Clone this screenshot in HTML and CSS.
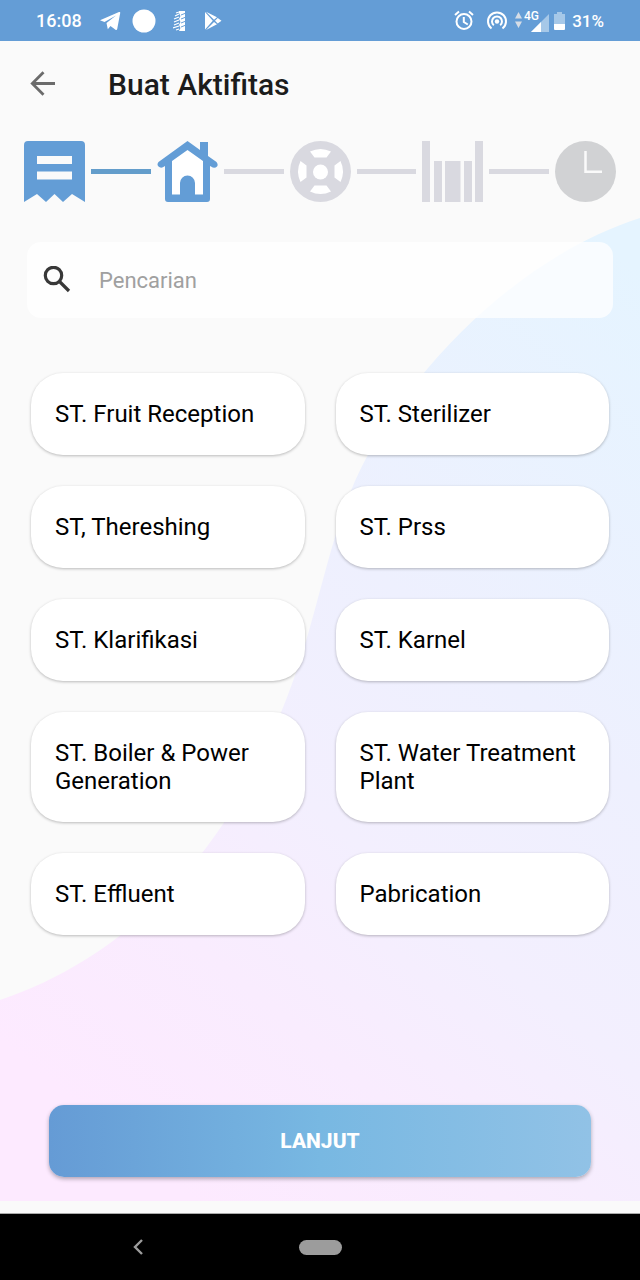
FILE: index.html
```html
<!DOCTYPE html>
<html lang="id">
<head>
<meta charset="utf-8">
<meta name="viewport" content="width=device-width, initial-scale=1">
<title>Buat Aktifitas</title>
<link rel="stylesheet" href="styles.css">
</head>
<body>
<div class="status-bar">
  <div class="status-left">
    <span class="clock">16:08</span>
    <svg width="22" height="20" viewBox="0 0 22 20"><path fill="#fff" d="M1 9.200L20 1Q21.500.500 21.200 2L18.200 18Q17.800 19.500 16.500 18.700L11.500 15L8.800 18.200L7.500 12L17 4.500L5.500 11Z"/></svg>
    <svg width="24" height="24" viewBox="0 0 24 24"><circle cx="12" cy="12" r="11.500" fill="#fff"/></svg>
    <svg width="14" height="22" viewBox="0 0 14 22"><path fill="#fff" d="M6 1h6v20H6l1.500-3L6 15l1.500-3L6 9l1.500-3L6 3z"/><path stroke="#68a0d8" stroke-width="1" d="M8 5l5-2M8 9l5-2M8 13l5-2M8 17l5-2"/><path stroke="#fff" stroke-width="1.200" d="M3 3l3-1M2 6l4-2M1 9l5-2M1 12l5-2M1 15l5-2M0 18l6-2M3 20l3-1"/></svg>
    <svg width="18" height="20" viewBox="0 0 18 20"><path fill="#fff" d="M1 1v17.500l7.800-8.700zM2 .800l8 8 3-2.500zM2 19l8-8 3 2.300zM11 9.800l2.700-2.800L17.500 9.800 13.700 12.600z"/></svg>
  </div>
  <div class="status-right">
    <svg width="20" height="21" viewBox="0 0 20 21"><g fill="none" stroke="#fff" stroke-width="2"><circle cx="10" cy="11.500" r="7.500"/><path d="M9.800 7v5l4 2.500M1 5l4-3.500M19 5l-4-3.500"/></g></svg>
    <svg class="hotspot" width="22" height="21" viewBox="0 0 22 21"><g fill="none" stroke="#fff" stroke-width="2"><path d="M5.500 18.500A9 9 0 1 1 16.500 18.500M7.800 15.300A5 5 0 1 1 14.200 15.300"/></g><circle cx="11" cy="11.500" r="2.200" fill="#fff"/></svg>
    <div class="signal">
      <svg width="7" height="20" viewBox="0 0 7 20"><path fill="#d6dde6" d="M3.500 1L7 7.500H0zM3.500 17L0 10.500h7z"/></svg>
      <svg width="25" height="24" viewBox="0 0 25 24"><path fill="#a6c8e8" d="M25 5v18H7z"/><path fill="#fff" d="M17 13v10H7z"/><text x="0" y="11" class="network">4G</text></svg>
    </div>
    <svg width="11" height="20" viewBox="0 0 11 20"><path fill="#a6c8e8" d="M3 1h5v2h3v11H0V3h3z"/><path fill="#fff" d="M0 13h11v5q0 1-1 1H1q-1 0-1-1z"/></svg>
    <span class="battery">31%</span>
  </div>
</div>

<div class="screen">
  <svg class="backdrop" viewBox="0 0 640 1160" preserveAspectRatio="none" aria-hidden="true">
    <defs>
      <linearGradient id="wash" gradientUnits="userSpaceOnUse" x1="640" y1="230" x2="0" y2="1000">
        <stop offset="0" stop-color="#e5f4ff"/>
        <stop offset=".4" stop-color="#eef0fe"/>
        <stop offset=".62" stop-color="#f3effe"/>
        <stop offset=".8" stop-color="#f9ecfe"/>
        <stop offset="1" stop-color="#fdeaff"/>
      </linearGradient>
    </defs>
    <path fill="url(#wash)" d="M640 177C520 215 405 330 355 440C325 510 315 590 282 669C235 790 145 910 0 959V1160H640Z"/>
  </svg>

  <header class="app-bar">
    <button class="back" type="button" aria-label="Kembali">
      <svg width="26" height="26" viewBox="0 0 26 26"><path fill="none" stroke="#6b6b6b" stroke-width="2.800" d="M26 12.500H4M14.500 1.300L3.300 12.500L14.500 23.700"/></svg>
    </button>
    <h1 class="title">Buat Aktifitas</h1>
  </header>

  <main class="content">
    <div class="steps">
      <svg class="step" viewBox="0 0 61 61"><path fill="#639dd6" fill-rule="evenodd" d="M4 0H57Q61 0 61 4V61L48 53L39 61L30.500 53L22 61L13 53L0 61V4Q0 0 4 0ZM13 15V23H48V15ZM13 30.500V38.500H48V30.500Z"/></svg>
      <span class="line done"></span>
      <svg class="step" viewBox="0 0 61 61"><path fill="#fff" d="M15 20L30.500 8L46 20V54H15z"/><path fill="#639dd6" fill-rule="evenodd" d="M30.500 0L43 9V1H51V15L59.500 21Q61.500 23.500 60 25.500Q57.500 28 54 25.500L53 25V58Q53 61 50 61H11Q8 61 8 58V25Q4 28 1.500 25.500Q-.500 23.500 1.500 21ZM30.500 9L15 20V53.500H23V42A7.500 7.500 0 0 1 38 42V53.500H46V20Z"/></svg>
      <span class="line"></span>
      <svg class="step" viewBox="0 0 61 61"><circle cx="30.500" cy="30.500" r="30.500" fill="#d9d9e0"/><g fill="#fff"><circle cx="30.500" cy="31" r="7.500"/><path d="M20 10.500Q30.500 5.500 41 10.500L36.500 16.500H24.500Z"/><path d="M20 10.500Q30.500 5.500 41 10.500L36.500 16.500H24.500Z" transform="rotate(90 30.500 30.500)"/><path d="M20 10.500Q30.500 5.500 41 10.500L36.500 16.500H24.500Z" transform="rotate(180 30.500 30.500)"/><path d="M20 10.500Q30.500 5.500 41 10.500L36.500 16.500H24.500Z" transform="rotate(270 30.500 30.500)"/></g></svg>
      <span class="line"></span>
      <svg class="step" viewBox="0 0 61 61"><path fill="#d9d9e0" d="M0 0H8V61H0zM12 20H20V61H12zM23 20H38.500V61H23zM42 20H50V61H42zM53 0H61V61H53z"/></svg>
      <span class="line"></span>
      <svg class="step" viewBox="0 0 61 61"><circle cx="30.500" cy="30.500" r="30.500" fill="#d1d2d4"/><path fill="none" stroke="#fafafa" stroke-width="2.500" d="M30.500 10V30.700H47"/></svg>
    </div>

    <label class="search">
      <svg width="28" height="28" viewBox="0 0 28 28"><g fill="none" stroke="#383838" stroke-width="3.200"><circle cx="10.500" cy="9.500" r="8.200"/><path d="M16.500 15.500L26 25"/></g></svg>
      <input class="search-input" type="search" placeholder="Pencarian" aria-label="Pencarian">
    </label>

    <div class="stations">
      <button class="station" type="button">ST. Fruit Reception</button>
      <button class="station" type="button">ST. Sterilizer</button>
      <button class="station" type="button">ST, Thereshing</button>
      <button class="station" type="button">ST. Prss</button>
      <button class="station" type="button">ST. Klarifikasi</button>
      <button class="station" type="button">ST. Karnel</button>
      <button class="station" type="button">ST. Boiler &amp; Power Generation</button>
      <button class="station" type="button">ST. Water Treatment Plant</button>
      <button class="station" type="button">ST. Effluent</button>
      <button class="station" type="button">Pabrication</button>
    </div>

    <button class="next" type="button">LANJUT</button>
  </main>
</div>

<nav class="system-nav">
  <button class="nav-back" type="button" aria-label="Sebelumnya"><svg width="10" height="16" viewBox="0 0 10 16"><path fill="none" stroke="#9c9c9c" stroke-width="2.400" d="M9 1L2 8L9 15"/></svg></button>
  <button class="nav-home" type="button" aria-label="Beranda"></button>
  <span></span>
</nav>
</body>
</html>
```
FILE: styles.css
```css
* {
  box-sizing: border-box;
}

body {
  margin: 0;
  min-height: 100vh;
  display: flex;
  flex-direction: column;
  background: #fafafa;
  color: #000;
  font-family: Roboto, "Noto Sans", sans-serif;
}

button {
  margin: 0;
  padding: 0;
  border: 0;
  background: none;
  color: inherit;
  font: inherit;
  cursor: pointer;
}

svg {
  display: block;
  flex-shrink: 0;
}

.status-bar {
  height: 41px;
  padding: 0 36px;
  display: flex;
  align-items: center;
  justify-content: space-between;
  background: #649dd6;
  color: #fff;
  font-size: 18px;
  font-weight: 500;
}

.status-left {
  display: flex;
  align-items: center;
  gap: 17px;
}

.status-left svg:nth-of-type(2) {
  margin-left: -6px;
}

.status-right {
  display: flex;
  align-items: center;
  gap: 5px;
}

.hotspot {
  margin: 0 2px 0 7px;
}

.signal {
  display: flex;
  align-items: center;
  gap: 2px;
}

.network {
  fill: #fff;
  font-size: 12px;
  font-weight: 500;
}

.battery {
  margin-left: 2px;
  font-size: 17px;
}

.screen {
  position: relative;
  flex: 1;
  display: flex;
  flex-direction: column;
  margin-bottom: 12px;
}

.backdrop {
  position: absolute;
  inset: 0;
  width: 100%;
  height: 100%;
  z-index: -1;
}

.app-bar {
  height: 86px;
  padding: 0 29px;
  display: flex;
  align-items: center;
  gap: 53px;
}

.title {
  margin: 0;
  color: #1c1c1c;
  font-size: 30px;
  font-weight: 500;
}

.content {
  flex: 1;
  display: flex;
  flex-direction: column;
  padding: 14px 24px 24px;
}

.steps {
  display: flex;
  align-items: center;
  gap: 6px;
}

.step {
  width: 61px;
  height: 61px;
}

.line {
  flex: 1;
  height: 5px;
  background: #d9d9e0;
}

.line.done {
  background: #639dcb;
}

.search {
  height: 76px;
  margin: 40px 3px 0;
  padding: 0 16px;
  display: flex;
  align-items: center;
  gap: 28px;
  border-radius: 14px;
  background: rgba(255, 255, 255, 0.75);
}

.search-input {
  flex: 1;
  min-width: 0;
  padding: 0;
  border: 0;
  outline: 0;
  background: none;
  font: inherit;
  font-size: 22px;
}

.search-input::placeholder {
  color: #a0a0a0;
  opacity: 1;
}

.stations {
  margin: 55px 7px 0;
  display: grid;
  grid-template-columns: 1fr 1fr;
  gap: 31px;
}

.station {
  padding: 27px 24px;
  border-radius: 32px;
  background: #fff;
  box-shadow: 0 1px 3px rgba(0, 0, 0, 0.26);
  font-size: 24px;
  line-height: 28px;
  text-align: left;
}

.next {
  height: 72px;
  margin: auto 25px 0;
  border-radius: 15px;
  background: linear-gradient(90deg, #659bd5, #78b8e2 50%, #91c2e6);
  box-shadow: 0 2px 4px rgba(0, 0, 0, 0.3);
  color: #fff;
  font-size: 21px;
  font-weight: 800;
}

.system-nav {
  height: 67px;
  padding: 0 133px;
  border-top: 1px solid #aaa;
  display: grid;
  grid-template-columns: 1fr auto 1fr;
  align-items: center;
  background: #000;
}

.nav-back {
  justify-self: start;
}

.nav-home {
  width: 43px;
  height: 15px;
  border-radius: 8px;
  background: #9c9c9c;
}
```
